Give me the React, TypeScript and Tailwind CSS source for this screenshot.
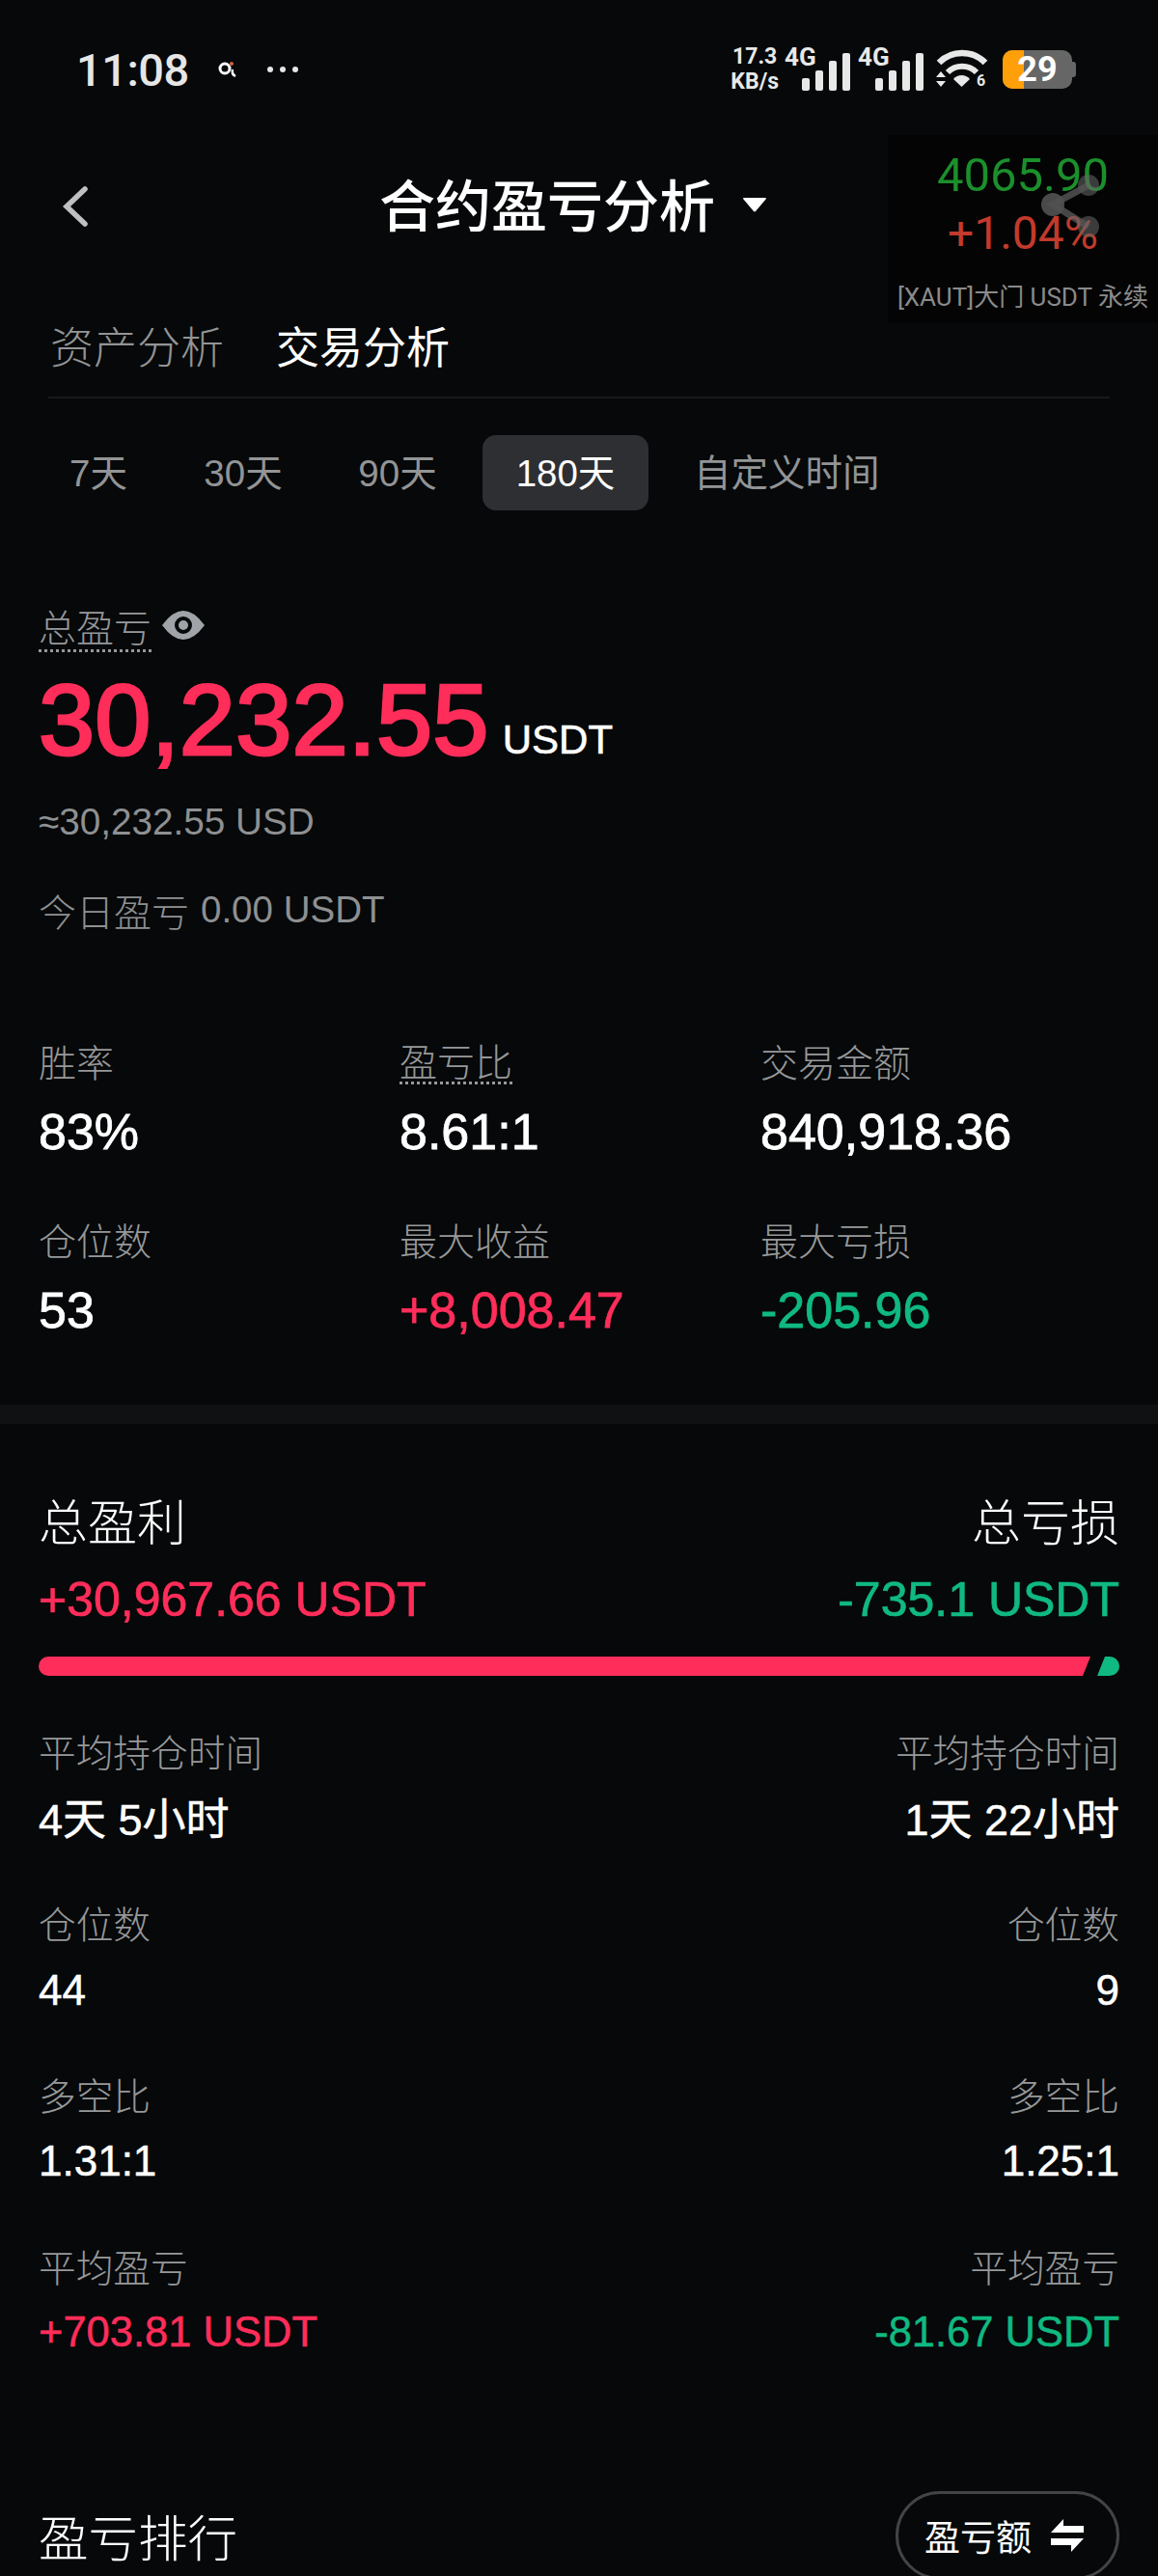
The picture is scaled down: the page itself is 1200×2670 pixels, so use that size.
const PINK = "text-[#ff2d5a]";
const GREEN = "text-[#10b981]";

const stats = [
  { label: "胜率", value: "83%", color: "text-white" },
  { label: "盈亏比", value: "8.61:1", color: "text-white", dotted: true },
  { label: "交易金额", value: "840,918.36", color: "text-white" },
  { label: "仓位数", value: "53", color: "text-white" },
  { label: "最大收益", value: "+8,008.47", color: PINK },
  { label: "最大亏损", value: "-205.96", color: GREEN },
];

const compare = [
  { label: "平均持仓时间", left: "4天 5小时", right: "1天 22小时", size: "text-[45px] pt-[4px]" },
  { label: "仓位数", left: "44", right: "9", size: "text-[44px] pt-[1px]" },
  { label: "多空比", left: "1.31:1", right: "1.25:1", size: "text-[44px]" },
  { label: "平均盈亏", left: "+703.81 USDT", right: "-81.67 USDT", size: "text-[43.5px]", leftColor: PINK, rightColor: GREEN },
];

const SignalBars = () => (
  <svg width="50" height="39" viewBox="0 0 50 39" className="absolute left-[18px] top-[5px]" fill="#e8e8e8">
    <rect x="0" y="26" width="8" height="13" rx="2" />
    <rect x="14" y="18" width="8" height="21" rx="2" />
    <rect x="28" y="8" width="8" height="31" rx="2" />
    <rect x="42" y="0" width="8" height="39" rx="2" />
  </svg>
);

const Signal = () => (
  <div className="relative w-[68px] h-[44px]">
    <span className="absolute left-0 top-[-4px] text-[26px] leading-[27px] font-bold text-[#e8e8e8] font-['Roboto',sans-serif]">4G</span>
    <SignalBars />
  </div>
);

const StatusBar = () => (
  <div className="h-[144px] flex items-center pl-[79px] pr-[85px] justify-between">
    <div className="flex items-center">
      <span className="text-[47px] font-medium text-[#e6e6e6] font-['Roboto',sans-serif] leading-none tracking-[-0.5px]">11:08</span>
      <svg width="20" height="18" viewBox="0 0 20 18" className="ml-[30px]">
        <circle cx="7" cy="8" r="5" fill="none" stroke="#fff" strokeWidth="3" />
        <path d="M15 9a6 6 0 0 0 3 7" fill="none" stroke="#fff" strokeWidth="2.5" />
        <circle cx="14" cy="3" r="2" fill="#d8603c" />
      </svg>
      <div className="flex gap-[7px] ml-[31px]">
        <span className="w-[6px] h-[6px] rounded-full bg-[#e6e6e6]" />
        <span className="w-[6px] h-[6px] rounded-full bg-[#e6e6e6]" />
        <span className="w-[6px] h-[6px] rounded-full bg-[#e6e6e6]" />
      </div>
    </div>
    <div className="flex items-center h-[50px]">
      <div className="flex flex-col items-center font-['Roboto',sans-serif] font-bold text-[#e8e8e8] text-[23px] leading-[26px] mr-[6px]">
        <span>17.3</span>
        <span>KB/s</span>
      </div>
      <Signal />
      <div className="w-[8px]" />
      <Signal />
      <svg width="54" height="42" viewBox="0 0 54 42" className="ml-[13px]">
        <path d="M3 14a34 34 0 0 1 48 0" fill="none" stroke="#e8e8e8" strokeWidth="6.5" />
        <path d="M12 24a21 21 0 0 1 30 0" fill="none" stroke="#e8e8e8" strokeWidth="6" />
        <path d="M18 31a11 11 0 0 1 17 0l-8.5 8z" fill="#e8e8e8" />
        <path d="M0 29l5-6 5 6zM0 33l5 6 5-6z" fill="#e8e8e8" />
        <text x="42" y="38" fontSize="16" fontWeight="700" fill="#e8e8e8" fontFamily="Roboto">6</text>
      </svg>
      <div className="relative ml-[15px] w-[72px] h-[40px] rounded-[10px] bg-[#666] overflow-hidden flex items-center justify-center">
        <div className="absolute left-0 top-0 bottom-0 w-[22px] bg-[#ff9f0a]" />
        <span className="relative text-[36px] font-bold text-white font-['Roboto',sans-serif] leading-none">29</span>
      </div>
      <div className="w-[4px] h-[16px] rounded-r-[3px] bg-[#666]" />
    </div>
  </div>
);

const Ticker = () => (
  <div className="absolute left-[920px] top-[140px] w-[280px] h-[195px] bg-[#040404] flex flex-col items-center font-['Roboto','Noto_Sans_CJK_SC',sans-serif]">
    <span className="mt-[14px] text-[49px] leading-[56px] text-[#1b8f2c]">4065.90</span>
    <span className="mt-[4px] text-[48px] leading-[56px] text-[#c23a2b]">+1.04%</span>
    <span className="mt-[23px] text-[26px] leading-[30px] text-[#8a8a8a] whitespace-nowrap">[XAUT]大门 USDT 永续</span>
    <svg width="64" height="66" viewBox="0 0 64 66" className="absolute left-[158px] top-[41px] opacity-80">
      <path d="M50 11L13 31l37 23" fill="none" stroke="#666" strokeOpacity="0.85" strokeWidth="7" />
      <circle cx="50" cy="11" r="11" fill="#666" fillOpacity="0.7" />
      <circle cx="13" cy="31" r="12" fill="#666" fillOpacity="0.9" />
      <circle cx="50" cy="54" r="11" fill="#666" fillOpacity="0.7" />
    </svg>
  </div>
);

const Header = () => (
  <div className="h-[136px] flex items-center pl-[64px]">
    <svg width="28" height="44" viewBox="0 0 28 44" className="mt-[3px]">
      <path d="M24 4L5 22l19 18" fill="none" stroke="#c0c0c0" strokeWidth="5.5" strokeLinecap="round" />
    </svg>
    <span className="ml-[301px] pb-[5px] text-[58px] leading-none font-medium text-white whitespace-nowrap font-['Noto_Sans_CJK_SC',sans-serif]">合约盈亏分析</span>
    <svg width="24" height="16" viewBox="0 0 24 16" className="ml-[29px]">
      <path d="M1 1h22a1 1 0 0 1 1 1L13 15a1.5 1.5 0 0 1-2 0L0 2a1 1 0 0 1 1-1z" fill="#fff" />
    </svg>
  </div>
);

const Tabs = () => (
  <div className="mx-[50px] h-[133px] pt-[24px] flex items-center gap-[54px] border-b-2 border-[#17191a] text-[45px] leading-none font-['Noto_Sans_CJK_SC',sans-serif]">
    <span className="ml-[2px] text-[#929496] font-light">资产分析</span>
    <span className="text-white">交易分析</span>
  </div>
);

const Ranges = () => (
  <div className="mt-[38px] ml-[42px] h-[78px] flex items-center text-[38.5px] leading-none text-[#929496] font-['Liberation_Sans','Noto_Sans_CJK_SC',sans-serif]">
    <span className="w-[120px] text-center pt-[2px]">7天</span>
    <span className="ml-[30px] w-[120px] text-center pt-[2px]">30天</span>
    <span className="ml-[40px] w-[120px] text-center pt-[2px]">90天</span>
    <span className="ml-[28px] w-[172px] h-[78px] pt-[2px] rounded-[14px] bg-[#2e2f33] text-white flex items-center justify-center">180天</span>
    <span className="ml-[47px] pt-[2px]">自定义时间</span>
  </div>
);

const Summary = () => (
  <div className="px-[40px]">
    <div className="mt-[94px] h-[53px] flex items-start">
      <span className="text-[39px] leading-[50px] text-[#96989a] border-b-[3px] border-dotted border-[#96989a] font-['Noto_Sans_CJK_SC',sans-serif] font-light">总盈亏</span>
      <svg width="44" height="30" viewBox="0 0 44 30" className="ml-[11px] mt-[10px]">
        <path fillRule="evenodd" fill="#a0a4a8" d="M0 15Q11 0 22 0t22 15Q33 30 22 30T0 15zM22 6a9 9 0 1 0 0 18 9 9 0 0 0 0-18zM22 10a5 5 0 1 1 0 10 5 5 0 0 1 0-10z" />
      </svg>
    </div>
    <div className="mt-[15px] h-[110px] flex items-center">
      <span className={`text-[104.5px] leading-none tracking-[0.2px] [-webkit-text-stroke:3px_currentColor] ${PINK}`}>30,232.55</span>
      <span className="ml-[14px] mt-[42px] text-[42px] leading-none text-white [-webkit-text-stroke:0.6px_white]">USDT</span>
    </div>
    <div className="mt-[28px] h-[46px] flex items-center text-[38.7px] text-[#8e9092]">≈30,232.55 USD</div>
    <div className="mt-[45px] h-[46px] flex items-center text-[#8e9092]">
      <span className="text-[39px] font-['Noto_Sans_CJK_SC',sans-serif] font-light">今日盈亏</span>
      <span className="ml-[12px] text-[38.5px]">0.00 USDT</span>
    </div>
  </div>
);

const StatsGrid = () => (
  <div className="mt-[110px] ml-[40px] grid grid-cols-[374px_374px_372px] gap-y-[60px]">
    {stats.map((s) => (
      <div key={s.label} className="h-[125px]">
        <div className="h-[46px] flex items-center">
          <span className={`text-[39px] leading-[46px] text-[#96989a] font-light font-['Noto_Sans_CJK_SC',sans-serif] ${s.dotted ? "border-b-[3px] border-dotted border-[#96989a]" : ""}`}>{s.label}</span>
        </div>
        <div className={`mt-[21px] h-[60px] flex items-center text-[52px] leading-none [-webkit-text-stroke:0.8px_currentColor] ${s.color}`}>{s.value}</div>
      </div>
    ))}
  </div>
);

const ProfitBar = () => (
  <div className="mt-[29px] mx-[40px] h-[20px] flex">
    <div className="w-[1090px] h-[20px] rounded-l-full bg-[#ff2d5a] [clip-path:polygon(0_0,100%_0,1082px_100%,0_100%)]" />
    <div className="ml-[7px] w-[23px] h-[20px] rounded-r-full bg-[#10b981] [clip-path:polygon(8px_0,100%_0,100%_100%,0_100%)]" />
  </div>
);

const Compare = () => (
  <div className="px-[40px]">
    <div className="mt-[69px] h-[60px] flex items-center justify-between text-[51px] leading-none text-white font-['Noto_Sans_CJK_SC',sans-serif] font-light">
      <span>总盈利</span>
      <span>总亏损</span>
    </div>
    <div className="mt-[23px] h-[60px] flex items-center justify-between text-[50px] leading-none [-webkit-text-stroke:0.7px_currentColor]">
      <span className={PINK}>+30,967.66 USDT</span>
      <span className={GREEN}>-735.1 USDT</span>
    </div>
  </div>
);

const CompareRows = () => (
  <div className="mt-[54px] px-[40px]">
    {compare.map((row) => (
      <div key={row.label} className="h-[178px]">
        <div className="h-[46px] flex items-center justify-between text-[38.7px] leading-none text-[#96989a] font-light font-['Noto_Sans_CJK_SC',sans-serif]">
          <span>{row.label}</span>
          <span>{row.label}</span>
        </div>
        <div className={`mt-[19px] h-[56px] flex items-center justify-between leading-none [-webkit-text-stroke:0.5px_currentColor] font-['Liberation_Sans','Noto_Sans_CJK_SC',sans-serif] ${row.size}`}>
          <span className={row.leftColor ?? "text-white"}>{row.left}</span>
          <span className={row.rightColor ?? "text-white"}>{row.right}</span>
        </div>
      </div>
    ))}
  </div>
);

const Ranking = () => (
  <div className="absolute left-0 right-0 top-[2582px] px-[40px] flex justify-between">
    <span className="mt-[16px] h-[60px] flex items-center text-[51.5px] leading-none text-white font-light font-['Noto_Sans_CJK_SC',sans-serif]">盈亏排行</span>
    <div className="w-[232px] h-[92px] rounded-full border-[3px] border-[#444] flex items-center pl-[27px]">
      <span className="text-[37px] leading-none text-white font-['Noto_Sans_CJK_SC',sans-serif]">盈亏额</span>
      <svg width="34" height="34" viewBox="0 0 34 34" className="ml-[20px]">
        <path d="M13 0v7h21v7H0z" fill="#fff" />
        <path d="M21 34v-7H0v-7h34z" fill="#fff" />
      </svg>
    </div>
  </div>
);

export default function App() {
  return (
    <div className="relative w-[1200px] h-[2670px] overflow-hidden bg-[#060809] font-['Liberation_Sans','Noto_Sans_CJK_SC',sans-serif]">
      <StatusBar />
      <Header />
      <Tabs />
      <Ranges />
      <Summary />
      <StatsGrid />
      <div className="mt-[70px] h-[20px] bg-[#101112]" />
      <Compare />
      <ProfitBar />
      <CompareRows />
      <Ranking />
      <Ticker />
    </div>
  );
}
